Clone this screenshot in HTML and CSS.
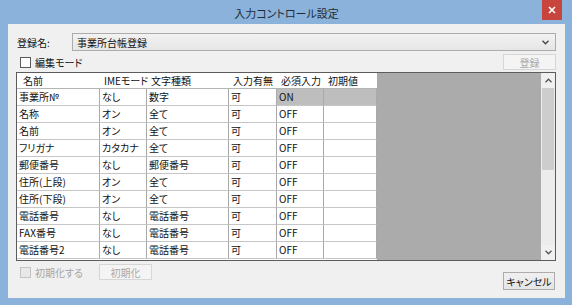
FILE: index.html
```html
<!DOCTYPE html>
<html lang="ja">
<head>
    <meta charset="UTF-8">
    <title>入力コントロール設定</title>
    <link rel="stylesheet" href="styles.css">
</head>
<body>
    <div class="window">
        <div class="titlebar">
            <div class="title">入力コントロール設定</div>
            <div class="close">
                <svg width="8" height="8" viewBox="0 0 8 8"><path d="M1 1L7 7M7 1L1 7" stroke="#fff" stroke-width="1.6"/></svg>
            </div>
        </div>

        <div class="client">
            <div class="name-row">
                <span class="name-label">登録名:</span>
                <div class="combo">
                    <span>事業所台帳登録</span>
                    <svg width="7" height="5" viewBox="0 0 7 5"><path d="M0.5 0.8L3.5 3.8L6.5 0.8" fill="none" stroke="#444" stroke-width="1.3"/></svg>
                </div>
            </div>

            <div class="mode-row">
                <label class="check"><span class="box"></span>編集モード</label>
                <button class="btn" disabled>登録</button>
            </div>

            <div class="grid-box">
                <div class="sheet">
                    <div class="head first">名前</div>
                    <div class="head">IMEモード</div>
                    <div class="head">文字種類</div>
                    <div class="head">入力有無</div>
                    <div class="head">必須入力</div>
                    <div class="head">初期値</div>

                    <div class="cell">事業所№</div><div class="cell">なし</div><div class="cell">数字</div><div class="cell">可</div><div class="cell sel">ON</div><div class="cell sel"></div>
                    <div class="cell">名称</div><div class="cell">オン</div><div class="cell">全て</div><div class="cell">可</div><div class="cell">OFF</div><div class="cell"></div>
                    <div class="cell">名前</div><div class="cell">オン</div><div class="cell">全て</div><div class="cell">可</div><div class="cell">OFF</div><div class="cell"></div>
                    <div class="cell">フリガナ</div><div class="cell">カタカナ</div><div class="cell">全て</div><div class="cell">可</div><div class="cell">OFF</div><div class="cell"></div>
                    <div class="cell">郵便番号</div><div class="cell">なし</div><div class="cell">郵便番号</div><div class="cell">可</div><div class="cell">OFF</div><div class="cell"></div>
                    <div class="cell">住所(上段)</div><div class="cell">オン</div><div class="cell">全て</div><div class="cell">可</div><div class="cell">OFF</div><div class="cell"></div>
                    <div class="cell">住所(下段)</div><div class="cell">オン</div><div class="cell">全て</div><div class="cell">可</div><div class="cell">OFF</div><div class="cell"></div>
                    <div class="cell">電話番号</div><div class="cell">なし</div><div class="cell">電話番号</div><div class="cell">可</div><div class="cell">OFF</div><div class="cell"></div>
                    <div class="cell">FAX番号</div><div class="cell">なし</div><div class="cell">電話番号</div><div class="cell">可</div><div class="cell">OFF</div><div class="cell"></div>
                    <div class="cell">電話番号2</div><div class="cell">なし</div><div class="cell">電話番号</div><div class="cell">可</div><div class="cell">OFF</div><div class="cell"></div>
                </div>
                <div class="filler"></div>
                <div class="vscroll">
                    <div class="arrow">
                        <svg width="7" height="5" viewBox="0 0 7 5"><path d="M0.5 4.2L3.5 1.2L6.5 4.2" fill="none" stroke="#555" stroke-width="1.3"/></svg>
                    </div>
                    <div class="thumb"></div>
                    <div class="track"></div>
                    <div class="arrow">
                        <svg width="7" height="5" viewBox="0 0 7 5"><path d="M0.5 0.8L3.5 3.8L6.5 0.8" fill="none" stroke="#555" stroke-width="1.3"/></svg>
                    </div>
                </div>
            </div>

            <div class="footer">
                <div class="footer-left">
                    <label class="check disabled"><span class="box"></span>初期化する</label>
                    <button class="btn init" disabled>初期化</button>
                </div>
                <button class="btn cancel">キャンセル</button>
            </div>
        </div>
    </div>
</body>
</html>
```

FILE: styles.css
```css
/* Base */
* {
    box-sizing: border-box;
}

body {
    margin: 0;
    font-family: "Noto Sans CJK JP", "Noto Sans", sans-serif;
    font-size: 10px;
    font-feature-settings: "palt";
    color: #111;
}

/* Window frame */
.window {
    width: 572px;
    height: 305px;
    background-color: #8ab2da;
    padding: 0 7px 7px 8px;
    display: flex;
    flex-direction: column;
}

.titlebar {
    height: 24px;
    display: flex;
    align-items: flex-start;
    position: relative;
}

.title {
    flex: 1;
    text-align: center;
    font-size: 11px;
    line-height: 26px;
    color: #1e2c3a;
}

.close {
    position: absolute;
    right: 3px;
    top: 0;
    width: 20px;
    height: 20px;
    background-color: #c8453d;
    display: flex;
    align-items: center;
    justify-content: center;
}

/* Client area */
.client {
    flex: 1;
    background-color: #f0f0f0;
    padding: 9px 9px 0 8px;
    display: flex;
    flex-direction: column;
}

.name-row {
    display: flex;
    align-items: center;
    height: 18px;
}

.name-label {
    width: 56px;
    padding-left: 1px;
}

.combo {
    flex: 1;
    height: 18px;
    border: 1px solid #acacac;
    background: linear-gradient(#f2f2f2, #e6e6e6);
    display: flex;
    align-items: center;
    justify-content: space-between;
    padding: 0 6px 0 4px;
}

.mode-row {
    margin-top: 3px;
    height: 16px;
    display: flex;
    align-items: center;
    justify-content: space-between;
}

.check {
    display: flex;
    align-items: center;
    gap: 4px;
    padding-left: 4px;
}

.check .box {
    width: 11px;
    height: 11px;
    border: 1px solid #5a5a5a;
    background-color: #fff;
}

.check.disabled {
    color: #a5a5a5;
}

.check.disabled .box {
    border-color: #c4c4c4;
    background-color: #e8e8e8;
}

/* Buttons */
.btn {
    font: inherit;
    font-feature-settings: "palt";
    height: 16px;
    width: 53px;
    padding: 0;
    border: 1px solid #acacac;
    background: linear-gradient(#f0f0f0, #e5e5e5);
    color: #111;
}

.btn:disabled {
    border-color: #d6d6d6;
    background: #f4f4f4;
    color: #a8a8a8;
}

/* Grid */
.grid-box {
    margin-top: 2px;
    height: 189px;
    border: 1px solid #5c5c5c;
    display: flex;
    background-color: #fff;
}

.sheet {
    width: 360px;
    display: grid;
    grid-template-columns: 83px 47px 82px 48px 47px 53px;
    grid-template-rows: 16px;
    grid-auto-rows: 17px;
    align-content: start;
}

.head {
    line-height: 15px;
    padding-left: 4px;
    border-bottom: 1px solid #b4b4b4;
    white-space: nowrap;
}

.head.first {
    padding-left: 6px;
}

.cell {
    line-height: 16px;
    padding-left: 2px;
    border-right: 1px solid #a9a9a9;
    border-bottom: 1px solid #c6c6c6;
    white-space: nowrap;
}

.cell.sel {
    background-color: #bebebe;
}

.filler {
    flex: 1;
    background-color: #ababab;
}

.vscroll {
    width: 14px;
    background-color: #ececec;
    display: flex;
    flex-direction: column;
}

.vscroll .arrow {
    height: 15px;
    display: flex;
    align-items: center;
    justify-content: center;
    background-color: #f0f0f0;
}

.vscroll .thumb {
    height: 82px;
    margin: 0 1px;
    background-color: #cdcdcd;
}

.vscroll .track {
    flex: 1;
}

/* Footer */
.footer {
    margin-top: 3px;
    display: flex;
    justify-content: space-between;
    align-items: flex-start;
}

.footer-left {
    display: flex;
    align-items: center;
    gap: 16px;
}

.btn.init {
    width: 53px;
}

.btn.cancel {
    margin-top: 8px;
    width: 52px;
    height: 18px;
    margin-right: 1px;
}
```
